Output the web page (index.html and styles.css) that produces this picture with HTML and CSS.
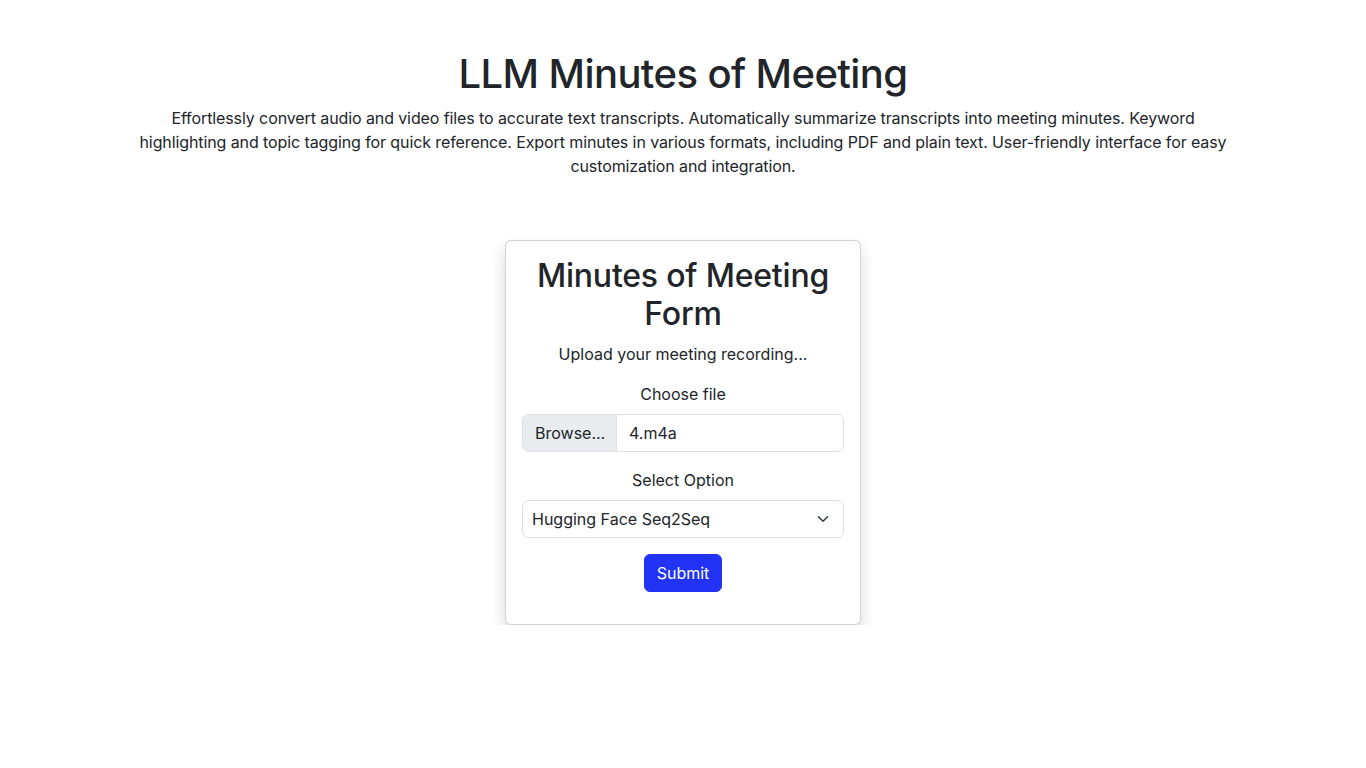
FILE: index.html
```html
<!DOCTYPE html>
<html lang="en">
<head>
<meta charset="utf-8">
<title>LLM Minutes of Meeting</title>
<link rel="stylesheet" href="styles.css">
</head>
<body>
<div class="container">
  <header class="hero">
    <h1 class="title">LLM Minutes of Meeting</h1>
    <p class="lead">Effortlessly convert audio and video files to accurate text transcripts. Automatically summarize transcripts into meeting minutes. Keyword highlighting and topic tagging for quick reference. Export minutes in various formats, including PDF and plain text. User-friendly interface for easy customization and integration.</p>
  </header>
  <div class="row">
    <div class="col">
      <form class="card">
        <h2 class="card-title">Minutes of Meeting Form</h2>
        <p class="card-sub">Upload your meeting recording...</p>
        <div class="field">
          <label class="label">Choose file</label>
          <div class="file-input">
            <span class="file-btn">Browse...</span>
            <span class="file-name">4.m4a</span>
          </div>
        </div>
        <div class="field">
          <label class="label">Select Option</label>
          <div class="select">
            <span>Hugging Face Seq2Seq</span>
            <svg class="chev" width="16" height="12" viewBox="0 0 16 16"><path d="m2 5 6 6 6-6" fill="none" stroke="#343a40" stroke-width="2" stroke-linecap="round" stroke-linejoin="round"/></svg>
          </div>
        </div>
        <div class="actions">
          <button type="button" class="btn">Submit</button>
        </div>
      </form>
    </div>
  </div>
</div>
</body>
</html>
```
FILE: styles.css
```css
* { box-sizing: border-box; }
html, body { margin: 0; padding: 0; background: #fff; }
body {
  font-family: "Inter", "Noto Sans", sans-serif;
  font-size: 16px;
  line-height: 1.5;
  color: #212529;
}
.container {
  width: 1140px;
  margin: 0 auto;
  padding: 50px 12px 0;
}
.hero { text-align: center; padding-bottom: 16px; }
.title {
  font-size: 40px;
  font-weight: 500;
  line-height: 1.2;
  margin: 0 0 8px;
  letter-spacing: -0.6px;
}
.lead {
  margin: 0 auto;
  max-width: 1100px;
  font-size: 16px;
  letter-spacing: -0.1px;
}
.row {
  display: flex;
  justify-content: center;
  margin: 46px -12px 0;
}
.col {
  width: 380px;
  padding: 0 12px;
}
.card {
  display: flex;
  flex-direction: column;
  border: 1px solid rgba(0,0,0,.175);
  border-radius: 6px;
  padding: 16px;
  background: #fff;
  box-shadow: 0 8px 16px rgba(0,0,0,.15);
  text-align: center;
}
.card-title {
  font-size: 32px;
  font-weight: 500;
  line-height: 1.2;
  margin: 0 0 8px;
  letter-spacing: -0.2px;
}
.card-sub { margin: 0 0 16px; }
.field { margin-bottom: 16px; display: flex; flex-direction: column; }
.label { display: block; margin-bottom: 8px; }
.file-input {
  display: flex;
  height: 38px;
  border: 1px solid #dee2e6;
  border-radius: 6px;
  overflow: hidden;
  text-align: left;
}
.file-btn {
  background: #e9ecef;
  border-right: 1px solid #dee2e6;
  padding: 6px 12px;
  width: 94px;
}
.file-name { padding: 6px 12px; }
.select {
  display: flex;
  align-items: center;
  justify-content: space-between;
  height: 38px;
  border: 1px solid #dee2e6;
  border-radius: 6px;
  padding: 6px 12px 6px 9px;
  text-align: left;
}
.chev { display: block; }
.actions { display: flex; justify-content: center; margin-bottom: 16px; }
.btn {
  font-family: inherit;
  font-size: 16px;
  line-height: 1.5;
  color: #fff;
  background: #2233f5;
  border: 1px solid #2233f5;
  border-radius: 6px;
  padding: 6px 12px;
  height: 38px;
  cursor: pointer;
}
```
